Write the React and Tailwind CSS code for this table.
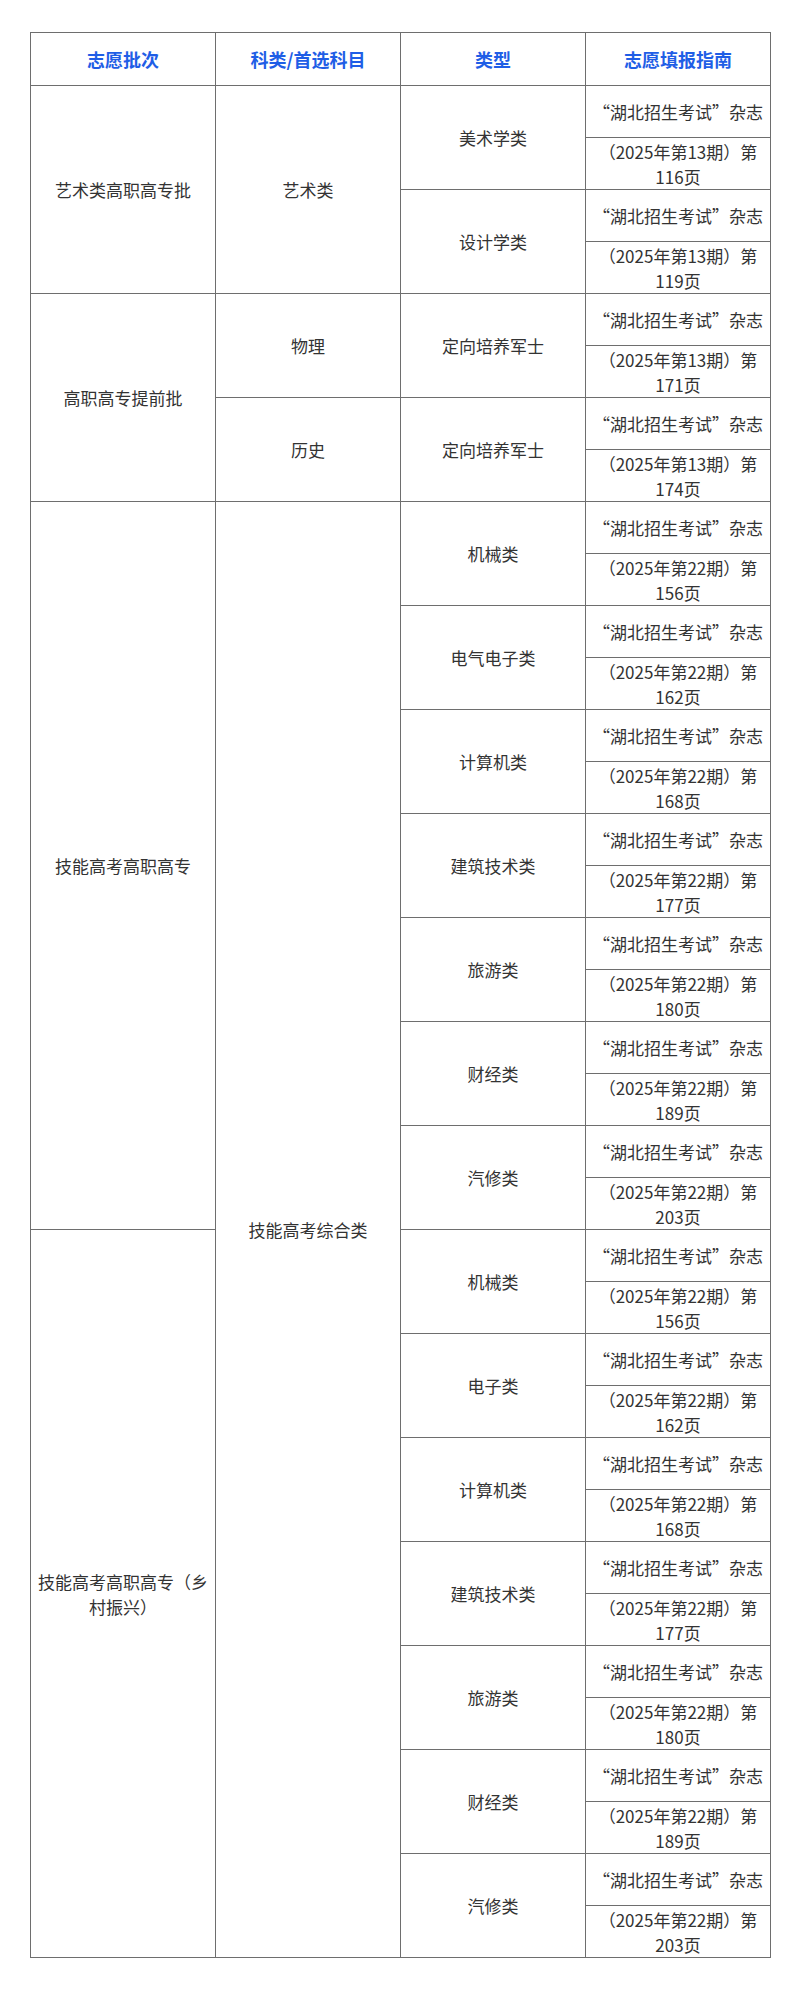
const groups = [
    { batch: "艺术类高职高专批", batchSpan: 2, subject: "艺术类", subjectSpan: 2, type: "美术学类", issue: "13", page: "116" },
    { type: "设计学类", issue: "13", page: "119" },
    { batch: "高职高专提前批", batchSpan: 2, subject: "物理", subjectSpan: 1, type: "定向培养军士", issue: "13", page: "171" },
    { subject: "历史", subjectSpan: 1, type: "定向培养军士", issue: "13", page: "174" },
    { batch: "技能高考高职高专", batchSpan: 7, subject: "技能高考综合类", subjectSpan: 14, type: "机械类", issue: "22", page: "156" },
    { type: "电气电子类", issue: "22", page: "162" },
    { type: "计算机类", issue: "22", page: "168" },
    { type: "建筑技术类", issue: "22", page: "177" },
    { type: "旅游类", issue: "22", page: "180" },
    { type: "财经类", issue: "22", page: "189" },
    { type: "汽修类", issue: "22", page: "203" },
    { batch: "技能高考高职高专（乡村振兴）", batchSpan: 7, type: "机械类", issue: "22", page: "156" },
    { type: "电子类", issue: "22", page: "162" },
    { type: "计算机类", issue: "22", page: "168" },
    { type: "建筑技术类", issue: "22", page: "177" },
    { type: "旅游类", issue: "22", page: "180" },
    { type: "财经类", issue: "22", page: "189" },
    { type: "汽修类", issue: "22", page: "203" },
]

const headers = ["志愿批次", "科类/首选科目", "类型", "志愿填报指南"]

const cell = "border border-[#6e6e6e] px-[5px] py-0 text-center align-middle"

export default function App() {
    return (
        <div className="min-h-[1992px] bg-white px-[30px] pt-[32px] font-['Noto_Sans_CJK_SC','Noto_Sans',sans-serif] text-[17px] leading-[25px] text-[#333333]">
            <table className="w-[740px] table-fixed border-collapse border-[1.5px] border-[#6e6e6e]">
                <colgroup>
                    <col className="w-[185px]" />
                    <col className="w-[185px]" />
                    <col className="w-[185px]" />
                    <col className="w-[185px]" />
                </colgroup>
                <thead>
                    <tr className="h-[53px]">
                        {headers.map((h) => (
                            <th key={h} className={`${cell} text-[18px] font-bold text-[#1f5ee6]`}>{h}</th>
                        ))}
                    </tr>
                </thead>
                <tbody>
                    {groups.map((g, i) => [
                        <tr key={i + "a"} className="h-[52px]">
                            {g.batch && <td rowSpan={g.batchSpan * 2} className={cell}>{g.batch}</td>}
                            {g.subject && <td rowSpan={g.subjectSpan * 2} className={cell}>{g.subject}</td>}
                            <td rowSpan={2} className={cell}>{g.type}</td>
                            <td className={cell}>“湖北招生考试”杂志</td>
                        </tr>,
                        <tr key={i + "b"} className="h-[52px]">
                            <td className={cell}>（2025年第{g.issue}期）第{g.page}页</td>
                        </tr>,
                    ])}
                </tbody>
            </table>
        </div>
    )
}
